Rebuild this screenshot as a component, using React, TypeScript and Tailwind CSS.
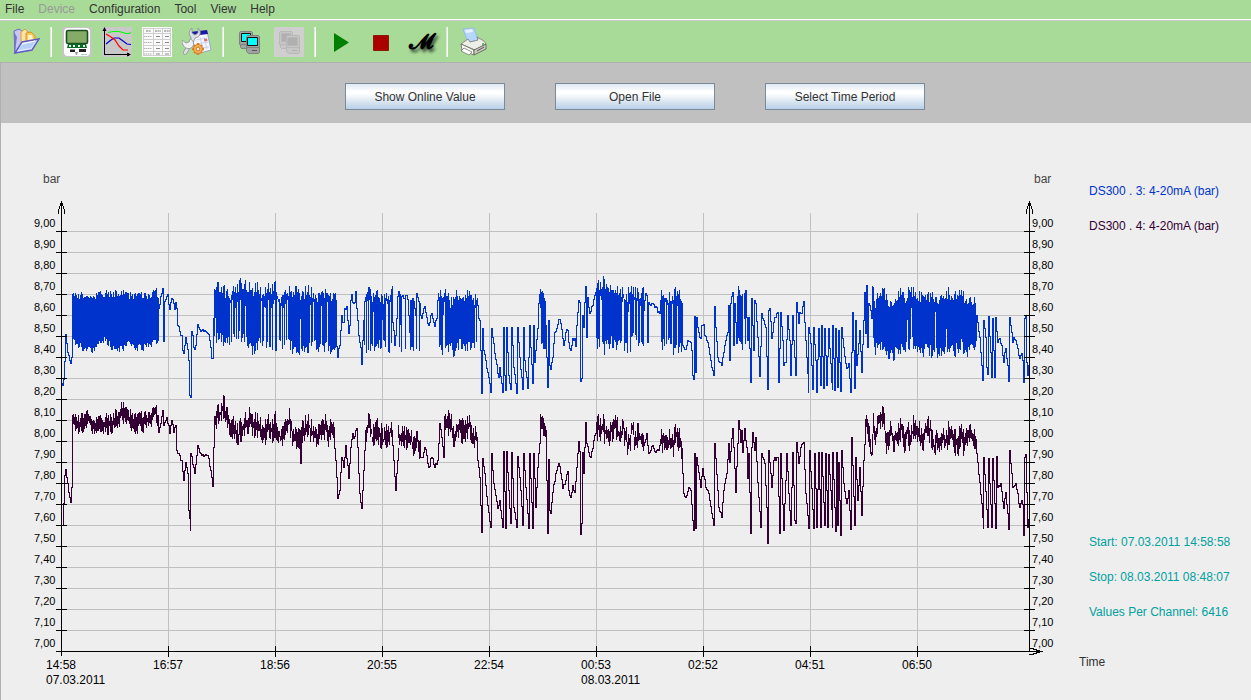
import React from 'react';

const MENU = ['File', 'Device', 'Configuration', 'Tool', 'View', 'Help'];

interface Segment {
  // plain trace, "x,y x,y ..."
  line?: string;
  // fast switching stretch: upper envelope, lower envelope (or a fixed thickness)
  hi?: string;
  lo?: string;
  thick?: number;
  jitter?: number;
  // columns that stay open below the given y
  holes?: string;
}

const BLUE: Segment[] = [
  { line: '61,383 62,385 63,379 64,361 65,334 66,343 67,352 68,355 69,360 70,363 71,357 72,318 72,293' },
  {
    hi: '72,295 84,296 101,294 120,293 135,296 151,296 155,288 157,294',
    lo: '72,342 76,345 85,348 92,351 98,344 105,340 113,348 123,348 130,342 137,348 148,347 153,344 157,342',
    jitter: 4,
  },
  { line: '157,298 158,340 158,308 159,304 160,296 161,293 162,288 163,341 164,335 164,301 166,296 167,294 168,304 169,309 170,302 171,298 173,303 174,309 175,302 176,308 177,325 178,326 179,331 181,335 182,350 183,353 184,345 185,337 186,343 187,349 188,360 189,395 190,397 191,331 192,335 193,347 194,349 195,345 196,334 197,324 199,329 201,330 203,331 205,331 207,333 208,334 209,340 210,347 211,358 212,358 213,318 214,288' },
  {
    hi: '214,286 221,288 228,295 240,284 250,290 257,288 262,297 267,290 275,288 280,299 288,292 296,290 302,298 308,287 315,298 320,292 328,294 335,297',
    lo: '214,339 228,342 234,334 241,338 252,349 258,345 263,345 270,345 280,347 290,345 295,352 304,350 315,347 324,345 335,353',
    jitter: 7,
    holes: '215,318 230,302 232,300 235,308 237,302 240,300 245,306 261,299 264,307 265,308 268,300 271,308 273,304 274,300 277,297 278,300 281,306 283,308 285,304 287,300 300,319 310,305 313,302 321,306 327,302',
  },
  { line: '335,300 336,346 337,357 338,348 339,345 340,330 341,315 342,322 343,322 344,308 346,306 347,320 348,333 349,325 350,300 351,294 352,302 354,302 355,291 356,308 357,320 358,335 359,342 360,347 361,364 362,340 363,320 364,300' },
  {
    hi: '364,300 367,287 372,296 376,292 381,299 388,297 391,290',
    lo: '364,350 370,352 376,342 384,346 388,352 391,345',
    jitter: 6,
    holes: '365,302 367,301 369,300 373,312 382,320 386,301 387,304 390,302',
  },
  { line: '391,286 392,322 393,330 394,345 395,335 396,318 397,296 398,291 399,346 399,294 401,351 401,296 404,298 405,348 405,295 407,299 410,349 410,300 411,346 412,298 413,350 413,301 415,315 416,348 416,293 418,301 419,350 419,303 420,315 421,318 422,313 423,308 424,306 425,312 427,323 428,325 429,322 430,315 431,313 432,318 434,326 435,320 436,318 437,300 438,292' },
  {
    hi: '439,291 442,300 445,290 450,304 456,292 462,304 468,291 473,301 476,298',
    lo: '439,345 443,351 450,344 454,355 460,343 466,347 476,346',
    jitter: 6,
    holes: '443,315 444,302 475,308',
  },
  { line: '476,298 477,305 478,318 479,320 480,350 481,393 482,393 482,328 483,350 485,360 487,372 489,383 490,392 491,328 493,343 494,353 498,377 499,367 502,392 503,327 504,375 505,390 506,327 508,375 510,389 511,327 513,367 516,393 517,327 519,357 522,389 523,327 524,360 527,388 529,325 530,347 532,383 533,325 534,362 537,328 538,303 540,288' },
  { hi: '540,290 545,298', lo: '540,310 541,345 545,348', jitter: 3 },
  { line: '545,325 547,387 548,320 549,365 550,369 552,357 554,332 556,328 558,319 560,323 562,338 563,345 565,332 567,330 568,342 570,350 572,338 574,338 575,346 576,325 578,300 579,302 580,381 581,378 582,315 583,327 584,302 585,286 586,337 587,297 588,307 589,313 592,305 594,295 596,287' },
  {
    hi: '596,288 602,282 610,287 616,292 622,292 626,300 630,287 636,293 643,292',
    lo: '596,343 604,348 611,341 618,347 622,342 628,351 633,338 640,346 643,350',
    jitter: 7,
    holes: '600,296 601,300 622,302 623,298 628,312 629,304 634,300 637,301 640,306',
  },
  { line: '643,310 644,300 645,293 646,295 647,342 648,302 650,305 652,303 655,306 657,312 659,313 660,300 661,292' },
  { hi: '661,293 667,298 672,298 676,290 681,300', lo: '661,345 668,343 674,350 681,348', jitter: 6, holes: '665,302 667,305 672,304 677,306' },
  { line: '681,303 682,345 683,347 685,349 686,345 687,340 690,342 691,350 692,375 693,379 694,316 695,372 696,317 697,327 699,337 700,338 701,325 703,324 704,335 707,342 708,347 711,367 713,375 714,306 715,327 717,357 721,365 723,352 725,340 727,332 728,305 729,360 730,303 732,292 733,345 734,303 736,343 737,296 738,285' },
  { hi: '738,292 742,297', lo: '738,340 742,348', jitter: 4 },
  { line: '743,293 745,343 745,290 747,340 748,317 750,382 751,360 751,298 753,350 754,300 755,303 757,337 759,376 761,313 763,320 765,327 767,389 768,310 769,308 771,338 774,317 777,312 778,382 780,312 782,340 783,365 785,362 787,315 789,340 790,375 792,315 793,340 795,375 796,302 798,323 799,312 801,313 803,301 804,322 806,357 808,392 808,327 810,343 812,389 813,327 815,360 816,392 818,328 820,385 821,325 823,388 824,328 826,385 828,328 831,382 832,389 832,325 834,390 835,328 837,387 838,330 840,391 841,327 843,347 846,368 848,363 850,392 852,312 854,388 855,320 856,365 859,330 861,372 863,320 864,292 865,333 866,285 867,347 868,303 870,310 871,318 872,285' },
  {
    hi: '872,290 875,302 879,291 883,290 888,303 893,299 897,300 901,291 905,302 908,292 912,290 918,299 923,292 928,299 932,294 936,301 942,292 948,294 954,297 960,294 965,298 970,301 975,302',
    lo: '872,335 875,350 881,345 886,352 892,355 898,352 905,347 912,342 918,352 926,349 934,354 940,353 948,347 955,350 961,344 966,352 975,348',
    jitter: 7,
    holes: '872,318 907,320 911,308 935,312 946,329',
  },
  { line: '975,340 976,315 977,322 979,337 981,365 982,380 983,320 985,337 986,367 987,374 988,316 990,352 991,377 992,318 993,350 994,377 995,317 997,342 999,338 1001,345 1003,362 1004,352 1005,348 1007,365 1008,381 1009,317 1011,332 1012,342 1013,337 1015,340 1017,348 1019,358 1021,353 1022,360 1023,382 1024,318 1025,315 1026,362 1027,375 1028,365 1029,372' },
];

const PURPLE: Segment[] = [
  { line: '61,525 62,525 63,503 64,475 65,469 67,483 68,492 70,502 71,497 71,487 72,447 72,423' },
  { hi: '72,416 80,418 87,410 92,418 99,419 105,418 112,416 118,411 121,405 127,411 135,417 145,415 151,412 155,405 157,412', thick: 13, jitter: 5 },
  { line: '157,415 158,432 160,423 162,410 163,425 166,417 168,425 169,433 171,420 173,432 175,425 176,450 178,453 181,460 183,480 185,462 187,473 188,510 190,530 190,453 193,467 194,473 197,445 200,453 203,456 207,455 210,470 212,486 213,447 214,423' },
  {
    hi: '214,413 220,407 223,399 227,412 232,419 238,427 244,420 250,413 257,419 263,429 267,420 272,424 275,418 280,432 285,424 289,414 292,425 296,433 302,427 308,416 312,426 315,430 320,422 325,418 328,429 331,416 334,430',
    thick: 15,
    jitter: 7,
  },
  { line: '299,430 300,463 301,440' },
  { line: '333,437 335,460 337,498 339,490 341,457 343,467 345,445 348,478 350,447 352,433 353,438 356,428 357,447 358,473 359,493 361,508 362,490 364,450 365,437' },
  { hi: '365,428 368,415 372,430 375,420 378,424 383,433 388,427 391,424', thick: 15, jitter: 7 },
  { line: '391,430 393,460 395,490 396,473 398,447' },
  { hi: '398,430 405,431 410,433 413,438 417,430 419,440', thick: 13, jitter: 6 },
  { line: '419,440 420,457 422,457 424,447 426,455 428,467 431,457 434,467 437,460 439,423 441,437 443,457 444,420' },
  { hi: '444,416 450,415 454,431 458,420 463,425 469,417 472,432 476,430', thick: 15, jitter: 6 },
  { line: '476,437 477,460 479,477 481,532 482,532 482,458 484,473 487,505 490,527 491,453 493,483 497,508 499,500 502,527 503,451 505,528 506,451 508,490 510,523 511,452 513,507 516,527 517,456 520,490 522,525 523,453 525,487 528,528 529,453 532,528 533,453 535,507 537,467 539,443 540,417' },
  { hi: '540,415 545,423', thick: 13, jitter: 3 },
  { line: '545,430 546,480 547,533 548,459 549,510 550,513 552,492 555,473 558,463 560,473 562,488 565,480 567,471 568,490 570,497 572,485 574,492 576,467 578,441 580,460 580,534 581,523 582,452 583,473 584,447 585,422 586,443 588,452 590,457 592,448 594,435 596,428' },
  { hi: '596,421 602,419 607,428 615,416 619,431 623,421 628,440 632,420 635,436 638,424 643,440', thick: 15, jitter: 7 },
  { line: '643,445 646,433 648,453 652,445 655,452 658,450 661,433' },
  { hi: '661,432 667,435 673,436 676,426 681,440', thick: 15, jitter: 6 },
  { line: '681,448 682,473 683,493 685,497 688,487 690,490 692,520 693,530 694,453 695,528 696,457 700,487 702,468 705,487 708,493 711,513 713,525 714,443 717,490 718,507 721,517 723,490 726,473 728,443 729,462 732,428 733,447 735,492 737,443 738,420 740,442 741,430 742,452 744,428 745,440 746,447 747,478 748,453 750,533 751,447 752,432 754,450 755,437 757,482 760,527 761,453 764,463 766,507 767,543 768,450 771,487 773,460 777,457 779,533 780,453 783,530 786,453 788,493 790,525 792,452 794,520 795,523 796,442 798,463 800,447 803,442 805,493 808,528 809,450 813,528 814,453 816,527 818,452 820,527 821,452 824,525 825,453 827,527 828,454 832,527 832,452 835,531 836,452 837,525 838,462 840,535 841,450 843,483 846,503 848,490 850,529 851,437 854,525 855,457 857,500 859,467 861,515 863,460 865,427' },
  {
    hi: '865,420 867,416 871,446 873,420 876,428 878,411 883,408 886,436 890,422 893,430 897,432 901,420 904,435 907,424 910,434 913,419 917,425 922,432 925,423 930,423 934,440 937,430 940,436 943,424 945,434 950,424 957,438 960,427 963,434 967,426 972,430 976,436',
    thick: 15,
    jitter: 7,
  },
  { line: '975,443 977,462 979,482 981,503 983,528 983,457 987,527 988,458 991,527 992,458 995,528 996,456 997,487 1000,483 1003,508 1005,492 1007,513 1008,529 1009,450 1012,487 1015,483 1019,507 1021,500 1023,507 1023,535 1024,457 1025,454 1027,527 1029,510' },
];

const parse = (s: string) => s.split(' ').map(p => p.split(',').map(Number));

function at(points: number[][], x: number) {
  const i = points.findIndex(p => p[0] >= x);
  if (i === -1) return points[points.length - 1][1];
  if (i === 0) return points[0][1];
  const [x0, y0] = points[i - 1];
  const [x1, y1] = points[i];
  return y0 + ((y1 - y0) * (x - x0)) / (x1 - x0);
}

// repeatable noise between -1 and 1
function noise(n: number) {
  const v = Math.sin(n * 127.1 + 11.7) * 43758.5453;
  return (v - Math.floor(v)) * 2 - 1;
}

function stepPath(points: number[][]) {
  let d = `M${points[0][0] + 0.5} ${points[0][1] + 0.5}`;
  for (let i = 1; i < points.length; i++) {
    const [x0, y0] = points[i - 1];
    const [x1, y1] = points[i];
    for (let x = x0 + 1; x < x1; x++) {
      const y = Math.round(y0 + ((y1 - y0) * (x - x0)) / (x1 - x0) + noise(x) * 2);
      d += `H${x + 0.5}V${y + 0.5}`;
    }
    d += `H${x1 + 0.5}V${y1 + 0.5}`;
  }
  return d;
}

function tracePath(segments: Segment[]) {
  let d = '';
  for (const seg of segments) {
    if (seg.line) {
      d += stepPath(parse(seg.line));
      continue;
    }
    const hi = parse(seg.hi!);
    const lo = seg.lo ? parse(seg.lo) : null;
    const holes = new Map(seg.holes ? parse(seg.holes).map(([x, y]) => [x, y] as [number, number]) : []);
    const j = seg.jitter || 0;
    for (let x = hi[0][0]; x <= hi[hi.length - 1][0]; x++) {
      const top = at(hi, x) + noise(x) * j;
      let bottom = (lo ? at(lo, x) : at(hi, x) + seg.thick!) + noise(x + 5000) * j;
      if (holes.has(x)) bottom = holes.get(x)!;
      d += `M${x + 0.5} ${Math.round(top)}V${Math.max(Math.round(bottom), Math.round(top) + 3)}`;
    }
  }
  return d;
}

const Y_TICKS = Array.from({ length: 21 }, (_, i) => ({
  y: 231 + i * 21,
  label: ((90 - i) / 10).toFixed(2).replace('.', ','),
}));

const X_TICKS = ['14:58', '16:57', '18:56', '20:55', '22:54', '00:53', '02:52', '04:51', '06:50'].map((label, i) => ({
  x: 61 + i * 107,
  label,
}));

function TrendChart() {
  return (
    <svg viewBox="1 123 1065 577" className="block h-auto w-full" fontFamily="'Liberation Sans', Arial, sans-serif" role="img" aria-label="Pressure trend">
      <g stroke="#c0c0c0" shapeRendering="crispEdges">
        {Y_TICKS.slice(0, 20).map(t => <path key={t.y} d={`M61 ${t.y + 0.5}H1029`} />)}
        {X_TICKS.slice(1).map(t => <path key={t.x} d={`M${t.x + 0.5} 213V651`} />)}
      </g>

      <path d={tracePath(BLUE)} fill="none" stroke="#0033cc" shapeRendering="crispEdges" />
      <path d={tracePath(PURPLE)} fill="none" stroke="#330033" shapeRendering="crispEdges" />

      <g stroke="#000" fill="none" shapeRendering="crispEdges">
        <path d="M61.5 202V656M1029.5 202V651M56 651.5H1041" />
        <path d="M58.5 214V210L61.5 202L64.5 210V214M1026.5 214V210L1029.5 202L1032.5 210V214" />
        <path d="M1029 648.5H1032L1041 651.5L1032 654.5H1029" />
        {Y_TICKS.map(t => <path key={t.y} d={`M56 ${t.y + 0.5}H67M1024 ${t.y + 0.5}H1035`} />)}
        {X_TICKS.slice(1).map(t => <path key={t.x} d={`M${t.x + 0.5} 646V657`} />)}
      </g>

      <g fontSize="11" fill="#000">
        {Y_TICKS.map(t => (
          <React.Fragment key={t.y}>
            <text x="34" y={t.y - 4}>{t.label}</text>
            <text x="1032" y={t.y - 4}>{t.label}</text>
          </React.Fragment>
        ))}
      </g>
      <g fontSize="12" fill="#000">
        {X_TICKS.map(t => <text key={t.x} x={t.x - 15} y="669">{t.label}</text>)}
        <text x="46" y="684">07.03.2011</text>
        <text x="581" y="684">08.03.2011</text>
      </g>
      <g fontSize="12" fill="#444">
        <text x="43" y="183">bar</text>
        <text x="1034" y="183">bar</text>
      </g>
    </svg>
  );
}

function OpenIcon() {
  return (
    <svg viewBox="0 0 30 30" className="size-[30px]">
      <path d="M4 4l5-2 4 3 1 16-9 5z" fill="#c9c8f4" stroke="#6d69c6" />
      <path d="M4 5l3 5-2 15-1 1z" fill="#7672cf" />
      <path d="M11 5l4-3 3 3 3 1-1 11-9 1z" fill="#fbe3a4" stroke="#dd9a26" strokeWidth=".9" />
      <path d="M16 6l5-1 4 4 0 8-9 0z" fill="#f8c75e" stroke="#d8901c" strokeWidth=".9" />
      <path d="M18 8l4 0 1 5-5 1z" fill="#fff3cc" />
      <path d="M5 26L12 15l17-3-7 11z" fill="#dfe6ff" stroke="#5f5bc0" strokeWidth="1.4" />
      <path d="M8 23l6-7 12-2-5 7z" fill="#b4d0fa" />
      <path d="M12 17l13-3" stroke="#fff" />
    </svg>
  );
}

function DeviceIcon() {
  return (
    <svg viewBox="0 0 30 30" className="size-[30px]">
      <path d="M0 0h30v30H0z" fill="#c4c6c4" />
      <rect x="2" y="1" width="26" height="28" rx="4" fill="#fff" />
      <rect x="4.500" y="3.500" width="21" height="13" rx="1.500" fill="#86ab68" stroke="#17501e" strokeWidth="1.600" />
      <path d="M6 17h18l1 4H5z" fill="#0a6a28" />
      <path d="M7 19h2m2 0h2m3 0h2m3 0h2" stroke="#e9f5e9" strokeWidth="2" />
      <path d="M8 22.500h5v2.500H8zM17 22h7v3h-7z" fill="#222" />
      <path d="M13 25h3l-1 3h-1z" fill="#999" />
      <path d="M19 27.500h6" stroke="#9fd9b0" />
    </svg>
  );
}

function CurvesIcon() {
  return (
    <svg viewBox="0 0 30 30" className="size-[30px]">
      <path d="M0 0h30v30H0z" fill="#c8c8c8" />
      <path d="M2.500 2v25.500H28M1 3h3M26 26v3" stroke="#000" fill="none" shapeRendering="crispEdges" />
      <path d="M2.500 0l2 4h-4zM29 27.500l-4-2v4z" fill="#000" />
      <path d="M6 5.500l5-1h6l4 1 3 1h3l2-1" stroke="#0f0" fill="none" strokeWidth="1.200" />
      <path d="M4 17l5-4 3-2h5l4 3 4 3 4 .5" stroke="#00c" fill="none" strokeWidth="1.200" />
      <path d="M4 7l5 3 4 3 4 6 4 4h5" stroke="#f00" fill="none" strokeWidth="1.200" />
    </svg>
  );
}

function TableIcon() {
  return (
    <svg viewBox="0 0 30 30" className="size-[30px]">
      <path d="M0 0h30v30H0z" fill="#fafafa" />
      <path d="M1 1.500h28M1 6.500h28M1 12.500h28M1 18.500h28M1 24.500h28M1 28.500h28M11.500 1v28M20.500 1v28M1.500 1v28M28.500 1v28" stroke="#cfcfcf" />
      <path d="M4 4h5M13 4h6M22 4h6" stroke="#777" strokeDasharray="2 .6" />
      <path d="M2 9.500h8M2 15.500h8M2 21.500h8M2 27h8" stroke="#b4b4b4" strokeDasharray="1.500 .5" />
      <path d="M14 9.500h4M14 15.500h4M14 21.500h4M14 27h4M23 9.500h4M23 15.500h4M23 21.500h4M23 27h4" stroke="#8a8a8a" />
    </svg>
  );
}

function SettingsIcon() {
  return (
    <svg viewBox="0 0 30 30" className="size-[30px]">
      <path d="M9 6l16-2 4 19-15 4z" fill="#f3f6ff" stroke="#8b97cc" strokeWidth=".8" />
      <path d="M8 5l17-2 1 4-17 2z" fill="#1818a8" />
      <path d="M14 13l11-2M15 17l11-2M20 21l7-1M18 10l3 12M22 10l3 12" stroke="#bcc6e6" strokeWidth=".7" />
      <path d="M22 12l3-.5.5 2.500-3 .5z" fill="#e56a6a" />
      <path d="M10 1v5l3 2 3-2V1c3 2 3 7 0 9l-3 1-2 5-6 10c-2 3-5 1-3-2l7-11 0-3C6 8 7 3 10 1z" fill="#dcdfe4" stroke="#8a8d94" strokeWidth=".8" />
      <path d="M0 13l4 3 3-1 1-3c4 1 5 7 1 9-4 2-9-1-9-8z" fill="#f0f1f3" stroke="#8d9097" strokeWidth=".8" />
      <g stroke="#e0841f" strokeWidth="2.400">
        <path d="M16 16v12M10 22h12M12 18l8 8M20 18l-8 8" />
      </g>
      <circle cx="16" cy="22" r="4.500" fill="#f7ae55" stroke="#cf7418" strokeWidth=".8" />
      <circle cx="16" cy="22" r="1.800" fill="#fff2dc" stroke="#b9610c" strokeWidth=".7" />
    </svg>
  );
}

function ComputersIcon({ off = false }: { off?: boolean }) {
  const body = off ? '#c6c6c6' : '#a0a4a0';
  const edge = off ? '#b8b8b8' : '#7f837f';
  const screen = off ? '#b0b0b0' : '#00ffff';
  return (
    <svg viewBox="0 0 30 30" className="size-[30px]">
      {off && <path d="M0 0h30v30H0z" fill="#cfcfcf" />}
      <g stroke={edge}>
        <path d="M6.500 4.500h11l1 1v12h-13v-12zM6.500 17.500h11v4h-10l-1-1z" fill={body} />
        <path d="M7.500 6.500h9v8h-9z" fill={screen} stroke={off ? edge : '#111'} />
        <path d="M13.500 8.500h11l1 1v11h-13v-11zM12.500 20.500h13v5l-1 1h-10l-2-2z" fill={body} />
        <path d="M13.500 10.500h10v8h-10z" fill={screen} stroke={off ? edge : '#111'} />
      </g>
      <path d="M18 23.500h5" stroke={off ? '#b0b0b0' : '#555'} />
    </svg>
  );
}

function PrinterIcon() {
  return (
    <svg viewBox="0 0 30 30" className="size-[30px]">
      <path d="M5 2l11-1 4 12-10 3z" fill="#b5d6ff" stroke="#8fb4e6" strokeWidth=".8" />
      <path d="M7 3l7-1 1 3-7 1z" fill="#e6f2ff" />
      <path d="M3 17l7-5 2 3 8-2-1-3 7 4 2 3-11 6z" fill="#eeeee8" stroke="#77776f" strokeWidth=".8" />
      <path d="M3 17l13 6v5L4 23z" fill="#fafaf6" stroke="#66665e" strokeWidth=".8" />
      <path d="M16 23l12-6v5l-12 6z" fill="#c9c9bf" stroke="#55554e" strokeWidth=".8" />
      <path d="M6 21l8 4-3 3-8-4z" fill="#fff" stroke="#77776f" strokeWidth=".8" />
      <path d="M19 24l7-4" stroke="#555" />
      <path d="M24 17h2" stroke="#3cae3c" strokeWidth="1.500" />
    </svg>
  );
}

function ToolButton({ label, disabled, children }: { label: string; disabled?: boolean; children: React.ReactNode }) {
  return (
    <button type="button" aria-label={label} disabled={disabled} className="flex size-[30px] shrink-0 items-center justify-center">
      {children}
    </button>
  );
}

function Separator() {
  return <div className="h-[30px] w-[2px] shrink-0 border-l border-[#dcebd6] bg-white" />;
}

function ActionButton({ children }: { children: React.ReactNode }) {
  return (
    <button
      type="button"
      className="h-[27px] w-[160px] border border-[#7a8a99] bg-[linear-gradient(180deg,#dde8f3_0%,#ffffff_30%,#ffffff_38%,#b8cfe5_100%)] text-[#333333]"
    >
      {children}
    </button>
  );
}

export default function App() {
  return (
    <div className="flex min-h-screen flex-col bg-[#eeeeee] font-['Liberation_Sans',Arial,sans-serif] text-[12px] leading-[16px] text-[#333333]">
      <nav className="flex h-[20px] gap-[14px] border-b border-white bg-[#a8db98] pt-px pl-[5px]">
        {MENU.map(item => (
          <button key={item} type="button" disabled={item === 'Device'} className="h-[16px] disabled:text-[#999999]">
            {item}
          </button>
        ))}
      </nav>

      <div className="flex h-[43px] items-start gap-[10px] border-t border-b border-t-[#cccccc] border-b-[#b0b0b0] bg-[#a8db98] pt-[6px] pl-[10px]">
        <ToolButton label="Open"><OpenIcon /></ToolButton>
        <Separator />
        <ToolButton label="Device"><DeviceIcon /></ToolButton>
        <ToolButton label="Curves"><CurvesIcon /></ToolButton>
        <ToolButton label="Table"><TableIcon /></ToolButton>
        <ToolButton label="Settings"><SettingsIcon /></ToolButton>
        <Separator />
        <ToolButton label="Connect"><ComputersIcon /></ToolButton>
        <ToolButton label="Disconnect" disabled><ComputersIcon off /></ToolButton>
        <Separator />
        <ToolButton label="Start">
          <svg viewBox="0 0 30 30" className="size-[30px]"><path d="M8 6l15 9.500L8 25z" fill="#008000" /></svg>
        </ToolButton>
        <ToolButton label="Stop">
          <svg viewBox="0 0 30 30" className="size-[30px]"><path d="M7.500 8.500h15v15h-15z" fill="#aa0000" stroke="#8a1a08" /></svg>
        </ToolButton>
        <ToolButton label="Marker">
          <span className="font-['DejaVu_Sans','DejaVu_Serif',serif] text-[22px] leading-[30px] font-bold text-black [text-shadow:2px_3px_3px_rgba(0,0,0,0.6)]">𝓜</span>
        </ToolButton>
        <Separator />
        <ToolButton label="Print"><PrinterIcon /></ToolButton>
      </div>

      <div className="flex flex-1 flex-col border-l border-[#b0b0b0]">
        <div className="flex h-[60px] items-end justify-center gap-[50px] bg-[#c0c0c0] pb-[13px] pl-[18px]">
          <ActionButton>Show Online Value</ActionButton>
          <ActionButton>Open File</ActionButton>
          <ActionButton>Select Time Period</ActionButton>
        </div>

        <main className="flex">
          <div className="min-w-0 flex-1">
            <TrendChart />
          </div>
          <aside className="flex w-[185px] shrink-0 flex-col justify-between pt-[60px] pb-[30px] pl-[13px] whitespace-nowrap">
            <div className="flex flex-col gap-[19px] pl-[10px]">
              <p className="text-[#0033cc]">DS300 . 3: 4-20mA (bar)</p>
              <p className="text-[#330033]">DS300 . 4: 4-20mA (bar)</p>
            </div>
            <div>
              <div className="flex flex-col gap-[19px] pl-[10px] text-[#00a0a0]">
                <p>Start: 07.03.2011 14:58:58</p>
                <p>Stop: 08.03.2011 08:48:07</p>
                <p>Values Per Channel: 6416</p>
              </div>
              <p className="mt-[34px]">Time</p>
            </div>
          </aside>
        </main>
      </div>
    </div>
  );
}
